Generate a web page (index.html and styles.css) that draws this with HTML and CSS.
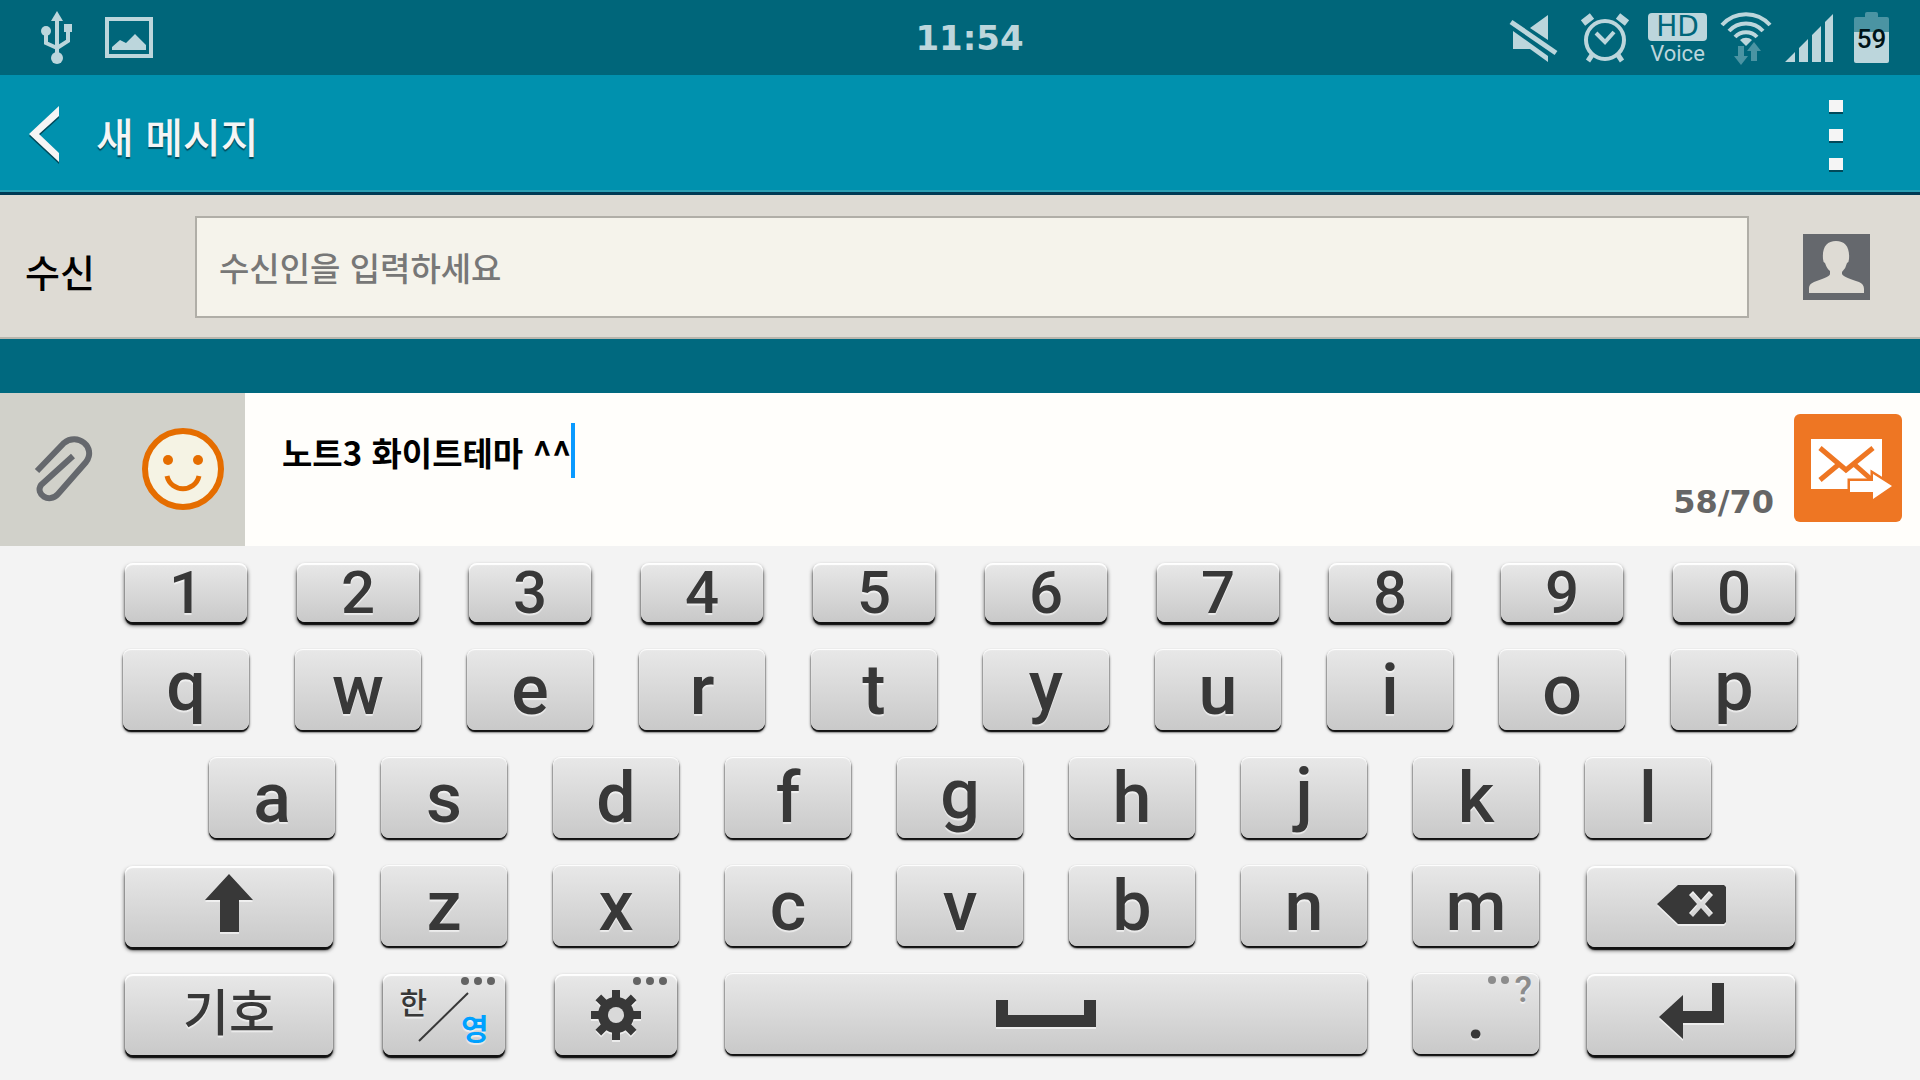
FILE: index.html
```
<!DOCTYPE html>
<html lang="ko">

<head>
  <meta charset="utf-8">
  <title>새 메시지</title>
  <link rel="stylesheet" href="styles.css">
</head>

<body>
  <div class="status-bar">
    <div class="status-left">
      <svg width="34" height="54" viewBox="0 0 34 54" fill="currentColor">
        <path d="M17 0l6 10H11z" />
        <path d="M17 8V44M6 20V32L17 37M28 18V30L17 37" fill="none" stroke="currentColor" stroke-width="4" />
        <circle cx="6" cy="20" r="5" />
        <rect x="24" y="13" width="8" height="8" />
        <circle cx="17" cy="47" r="6" />
      </svg>
      <svg width="48" height="41" viewBox="0 0 48 41" fill="currentColor">
        <rect x="2" y="2" width="44" height="37" fill="none" stroke="currentColor" stroke-width="4" />
        <path d="M7 30l8-7 6 3 9-9 11 11v5H7z" />
      </svg>
    </div>

    <div class="clock">11:54</div>

    <div class="status-right">
      <svg width="50" height="50" viewBox="0 0 50 50" fill="currentColor">
        <path d="M22 15L40 2V27zM5 18L40 43V49L22 36H5z" />
        <path d="M3 9L48 40" stroke="#00667a" stroke-width="10" />
        <path d="M3 9L48 40" stroke="currentColor" stroke-width="5" />
      </svg>
      <svg class="alarm" width="50" height="50" viewBox="0 0 50 50" fill="none" stroke="currentColor">
        <circle cx="25" cy="27" r="19" stroke-width="4" />
        <path d="M16 20l9 9 9-10" stroke-width="4" />
        <path d="M3 10l9-7M47 10l-9-7" stroke-width="7" />
        <path d="M12 42l-4 6M38 42l4 6" stroke-width="5" />
      </svg>
      <div class="hd-voice"><span class="hd">HD</span><span class="voice">Voice</span></div>
      <svg width="52" height="54" viewBox="0 0 52 54" fill="none">
        <path d="M2 14A32 32 0 0 1 50 14M9 20A23 23 0 0 1 43 20M15 26A15 15 0 0 1 37 26" stroke="currentColor" stroke-width="4" />
        <path d="M20 29A9 9 0 0 1 32 29L26 35z" fill="currentColor" />
        <path class="dim" d="M18 35h6v10h4l-7 9-7-9h4zM31 50h6V40h4l-7-9-7 9h4z" />
      </svg>
      <svg width="48" height="48" viewBox="0 0 48 48" fill="currentColor">
        <path d="M0 48L10 38V48zM14 34l9-9V48H14zM27 21l9-9V48H27zM40 8l8-8V48H40z" />
      </svg>
      <div class="battery">59</div>
    </div>
  </div>

  <header class="app-bar">
    <button class="icon-button" type="button" aria-label="뒤로">
      <svg width="30" height="58" viewBox="0 0 30 58">
        <path d="M0 30L30 2V12L10 30L30 49V58z" fill="#00495a" />
        <path d="M0 28L30 0V10L10 28L30 47V56z" fill="#f5f5f5" />
      </svg>
    </button>
    <h1>새 메시지</h1>
    <button class="icon-button more" type="button" aria-label="더보기"><i></i><i></i><i></i></button>
  </header>

  <div class="recipient">
    <label for="to">수신</label>
    <input id="to" type="text" placeholder="수신인을 입력하세요">
    <button class="icon-button" type="button" aria-label="연락처">
      <svg width="67" height="66" viewBox="0 0 67 66">
        <rect width="67" height="66" fill="#65686d" />
        <path d="M6 59V54Q6 50 11 48C18 45 27 43 27 40V37Q24 35 22 29Q20 28 20 25C19 13 24 7 33 7S47 13 46 25Q46 28 44 29Q43 34 39 38V40C40 43 48 45 56 48Q61 50 61 55V59z" fill="#dedbd4" />
      </svg>
    </button>
  </div>

  <div class="thread"></div>

  <div class="compose">
    <div class="attach">
      <button class="icon-button" type="button" aria-label="첨부">
        <svg width="62" height="66" viewBox="0 0 62 66" fill="none" stroke="#65686d" stroke-width="6">
          <path d="M4 35L31 7C44-4 64 11 53 26L25 58C16 68 2 58 8 49L40 20" />
        </svg>
      </button>
      <button class="icon-button" type="button" aria-label="이모티콘">
        <svg width="82" height="82" viewBox="0 0 82 82">
          <circle cx="41" cy="41" r="38" fill="#f5f3e4" stroke="#e56d00" stroke-width="6" />
          <circle cx="26" cy="32" r="5" fill="#e56d00" />
          <circle cx="56" cy="32" r="5" fill="#e56d00" />
          <path d="M25 48C29 65 53 65 57 48" fill="none" stroke="#e56d00" stroke-width="5" />
        </svg>
      </button>
    </div>
    <div class="message">
      <input class="message-text" type="text" value="노트3 화이트테마 ^^" aria-label="메시지">
      <span class="caret"></span>
    </div>
    <span class="counter">58/70</span>
    <button class="send" type="button" aria-label="보내기">
      <svg width="108" height="108" viewBox="0 0 108 108">
        <rect x="17" y="25" width="71" height="50" fill="#fff" />
        <path d="M26 34L52 56L79 34M26 66L44 51M61 51L78 66" fill="none" stroke="#ee7623" stroke-width="5" />
        <path d="M56 67H79V60L98 72L79 85V78H56z" fill="#fff" stroke="#ee7623" stroke-width="5" paint-order="stroke" />
      </svg>
    </button>
  </div>

  <div class="keyboard">
    <div class="row digits">
      <button class="key fn">1</button>
      <button class="key fn">2</button>
      <button class="key fn">3</button>
      <button class="key fn">4</button>
      <button class="key fn">5</button>
      <button class="key fn">6</button>
      <button class="key fn">7</button>
      <button class="key fn">8</button>
      <button class="key fn">9</button>
      <button class="key fn">0</button>
    </div>
    <div class="row">
      <button class="key desc">q</button>
      <button class="key">w</button>
      <button class="key">e</button>
      <button class="key">r</button>
      <button class="key">t</button>
      <button class="key desc">y</button>
      <button class="key">u</button>
      <button class="key">i</button>
      <button class="key">o</button>
      <button class="key desc">p</button>
    </div>
    <div class="row indent">
      <button class="key">a</button>
      <button class="key">s</button>
      <button class="key">d</button>
      <button class="key">f</button>
      <button class="key desc">g</button>
      <button class="key">h</button>
      <button class="key desc">j</button>
      <button class="key">k</button>
      <button class="key">l</button>
    </div>
    <div class="row">
      <button class="key fn wide" aria-label="Shift">
        <svg class="glyph" width="48" height="58" viewBox="0 0 48 58"><path d="M24 0L48 26H34V58H15V26H0z" /></svg>
      </button>
      <button class="key">z</button>
      <button class="key">x</button>
      <button class="key">c</button>
      <button class="key">v</button>
      <button class="key">b</button>
      <button class="key">n</button>
      <button class="key">m</button>
      <button class="key fn wide" aria-label="삭제">
        <svg class="glyph" width="69" height="43" viewBox="0 -4 69 43">
          <path fill-rule="evenodd" d="M0 19L21 0H67L69 2V37L67 39H21zM32 10L40 19L32 28L36 32L44 23L52 32L56 28L48 19L56 10L52 6L44 15L36 6z" />
        </svg>
      </button>
    </div>
    <div class="row">
      <button class="key fn wide symbols">기호</button>
      <button class="key fn lang" aria-label="한/영">
        <span class="ko">한</span>
        <svg width="52" height="50" viewBox="0 0 52 50"><path d="M1 49L50 1" stroke="#383838" stroke-width="2" /></svg>
        <span class="en">영</span>
        <span class="dots"><i></i><i></i><i></i></span>
      </button>
      <button class="key fn" aria-label="설정">
        <svg class="glyph" width="50" height="50" viewBox="-25 -25 50 50">
          <path d="M-4-25H4V25H-4zM-25-4H25V4H-25z" />
          <path transform="rotate(45)" d="M-4-25H4V25H-4zM-25-4H25V4H-25z" />
          <circle r="18" />
          <circle class="hole" r="8" />
        </svg>
        <span class="dots"><i></i><i></i><i></i></span>
      </button>
      <button class="key space" aria-label="스페이스">
        <svg class="glyph" width="100" height="27" viewBox="0 0 100 27"><path d="M0 0H12V15H88V0H100V27H0z" /></svg>
      </button>
      <button class="key">.<span class="dots faint"><i></i><i></i><b>?</b></span></button>
      <button class="key fn wide" aria-label="Enter">
        <svg class="glyph" width="65" height="56" viewBox="0 0 65 56"><path d="M0 34L24 12V28H53V0H65V40H24V56z" /></svg>
      </button>
    </div>
  </div>
</body>

</html>
```
FILE: styles.css
```
* {
  box-sizing: border-box;
}

body {
  display: flex;
  flex-direction: column;
  min-height: 100vh;
  margin: 0;
  background: #f3f3f3;
  font-family: "Noto Sans CJK KR", sans-serif;
}

button {
  padding: 0;
  border: 0;
  background: none;
  font: inherit;
  cursor: pointer;
}

svg {
  display: block;
  flex: none;
}

.icon-button {
  display: block;
}

/* status bar */

.status-bar {
  display: grid;
  grid-template-columns: 1fr auto 1fr;
  align-items: center;
  height: 75px;
  padding: 0 31px 0 40px;
  background: #00667a;
  color: #bcd6dc;
}

.status-left {
  display: flex;
  align-items: center;
  gap: 31px;
}

.clock {
  padding-left: 10px;
  font: bold 34px "DejaVu Sans", sans-serif;
}

.status-right {
  display: flex;
  align-items: center;
  justify-content: flex-end;
  gap: 13px;
}

.alarm {
  margin: 0 5px 0 9px;
}

.dim {
  fill: #4b94a3;
}

.hd-voice {
  display: flex;
  flex-direction: column;
  gap: 2px;
  width: 59px;
  height: 50px;
  text-align: center;
}

.hd {
  height: 28px;
  border-radius: 4px;
  background: #bcd6dc;
  color: #00667a;
  font: 28px/28px "DejaVu Sans", sans-serif;
}

.voice {
  font: 22px/22px Roboto, sans-serif;
}

.battery {
  position: relative;
  width: 35px;
  height: 46px;
  margin: 4px 0 0 8px;
  border-radius: 2px;
  background: linear-gradient(#4b94a3 15px, #bcd6dc 15px);
  color: #001318;
  font: 500 26px/44px Roboto, sans-serif;
  text-align: center;
}

.battery::before {
  content: "";
  position: absolute;
  left: 11px;
  top: -5px;
  width: 13px;
  height: 5px;
  border-radius: 2px 2px 0 0;
  background: #4b94a3;
}

/* title */

.app-bar {
  display: flex;
  align-items: center;
  height: 120px;
  padding: 3px 77px 0 29px;
  border-bottom: 3px solid #003a54;
  background: #0091ae;
  box-shadow: inset 0 -2px #2a9fb4;
}

.app-bar h1 {
  flex: 1;
  margin: 0 0 0 37px;
  color: #f5f5f5;
  font-size: 41px;
  font-weight: 500;
  line-height: 60px;
  text-shadow: 0 2px 1px #00495a;
}

.more {
  display: flex;
  flex-direction: column;
  gap: 17px;
}

.more i {
  width: 14px;
  height: 12px;
  background: #f5f5f5;
  box-shadow: 0 2px #00495a;
}

/* recipient */

.recipient {
  display: flex;
  align-items: center;
  height: 144px;
  padding: 2px 50px 0 25px;
  border-bottom: 2px solid #b9b6ad;
  background: #dedbd4;
}

.recipient label {
  width: 170px;
  padding-top: 6px;
  color: #000;
  font-size: 38px;
  font-weight: 500;
}

.recipient input {
  flex: 1;
  min-width: 0;
  height: 102px;
  margin-right: 54px;
  padding: 0 22px;
  border: 2px solid #b0aea7;
  background: #f5f3eb;
  font: 500 33px "Noto Sans CJK KR", sans-serif;
}

.recipient input::placeholder {
  color: #777;
}

.thread {
  height: 54px;
  background: #00697f;
}

/* message */

.compose {
  display: flex;
  height: 153px;
  padding-right: 18px;
  background: #fffefb;
}

.attach {
  display: flex;
  align-items: center;
  justify-content: space-between;
  width: 245px;
  padding: 0 21px 2px 33px;
  background: #d1d1ca;
}

.message {
  display: flex;
  flex: 1;
  align-items: flex-start;
  min-width: 0;
  padding: 30px 0 0 37px;
}

.message-text {
  field-sizing: content;
  height: 58px;
  padding: 0;
  border: 0;
  outline: 0;
  background: none;
  color: #000;
  font: bold 33px "Noto Sans CJK KR", sans-serif;
}

.caret {
  width: 4px;
  height: 55px;
  background: #0a9aff;
}

.counter {
  align-self: flex-end;
  margin: 0 20px 25px 0;
  color: #666;
  font: bold 32px "DejaVu Sans", sans-serif;
}

.send {
  align-self: flex-start;
  margin-top: 21px;
  border-radius: 6px;
  background: #ee7623;
}

/* keyboard: every row is cut into 20 half-key columns */

.keyboard {
  display: flex;
  flex: 1;
  flex-direction: column;
  gap: 27px;
  padding: 17px 100px 25px;
}

.row {
  display: grid;
  grid-template-columns: repeat(20, 1fr);
  height: 81px;
}

.digits {
  height: 59px;
}

.key {
  position: relative;
  display: flex;
  grid-column: span 2;
  justify-content: center;
  align-items: center;
  margin: 0 23px;
  border-radius: 8px;
  background: linear-gradient(#e8e8e8, #c9c9c9);
  box-shadow: inset 0 1px 1px #fff, 0 2px 1px #111, 0 2px 3px rgba(0, 0, 0, 0.8);
  color: #383838;
  font: 500 70px/80px Roboto, sans-serif;
  text-shadow: 0 2px 1px rgba(255, 255, 255, 0.6);
}

.fn {
  margin: 1px 25px -1px;
  box-shadow: inset 0 2px 1px #fff, 0 3px 1px #111, 0 3px 4px rgba(0, 0, 0, 0.8);
}

.digits .key {
  margin: 0 25px;
  font-size: 60px;
  line-height: 59px;
}

.desc {
  padding-bottom: 8px;
  line-height: 72px;
}

.indent .key:first-child {
  grid-column: 2 / span 2;
}

.wide {
  grid-column: span 3;
  padding-bottom: 8px;
}

.space {
  grid-column: span 8;
}

.glyph {
  fill: currentColor;
  filter: drop-shadow(0 2px 0 rgba(255, 255, 255, 0.6));
}

.hole {
  fill: #d9d9d9;
}

.symbols {
  padding-bottom: 12px;
  font: 500 50px/68px "Noto Sans CJK KR", sans-serif;
}

.lang {
  font: 500 30px/36px "Noto Sans CJK KR", sans-serif;
}

.lang svg {
  margin: 4px -9px 0;
}

.ko {
  align-self: flex-start;
  padding-top: 9px;
}

.en {
  align-self: flex-end;
  padding-bottom: 10px;
  color: #00a1ff;
  font-weight: bold;
}

.dots {
  position: absolute;
  top: 3px;
  right: 10px;
  display: flex;
  gap: 5px;
}

.dots i {
  width: 8px;
  height: 8px;
  border-radius: 50%;
  background: #636363;
}

.faint {
  right: 7px;
  color: #8c8c8c;
  font: 500 36px/28px Roboto, sans-serif;
}

.faint i {
  background: #8c8c8c;
}

.faint b {
  font-weight: 500;
}
```
